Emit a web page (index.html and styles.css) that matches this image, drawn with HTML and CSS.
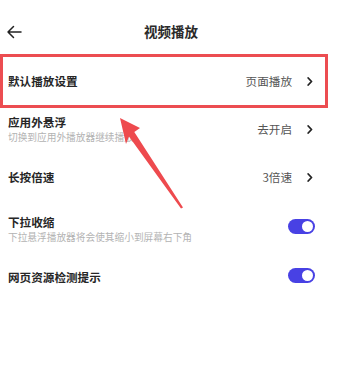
FILE: index.html
```html
<!DOCTYPE html>
<html lang="zh-CN">
<head>
<meta charset="utf-8">
<link rel="stylesheet" href="styles.css">
</head>
<body>
<div class="page">
  <header class="topbar">
    <svg class="back" width="16" height="14" viewBox="0 0 16 14"><path d="M15 7H2M7.5 1.5L2 7l5.5 5.5" fill="none" stroke="#222" stroke-width="1.5" stroke-linecap="round" stroke-linejoin="round"/></svg>
    <h1 class="title">视频播放</h1>
  </header>
  <ul class="list">
    <li class="row row-hl">
      <div class="texts"><span class="name">默认播放设置</span></div>
      <span class="value">页面播放</span>
      <svg class="chev" width="6" height="9" viewBox="0 0 6 9"><path d="M1.2 1l3.3 3.5L1.2 8" fill="none" stroke="#222" stroke-width="1.8" stroke-linecap="round" stroke-linejoin="round"/></svg>
    </li>
    <li class="row">
      <div class="texts"><span class="name">应用外悬浮</span><span class="sub">切换到应用外播放器继续播放</span></div>
      <span class="value">去开启</span>
      <svg class="chev" width="6" height="9" viewBox="0 0 6 9"><path d="M1.2 1l3.3 3.5L1.2 8" fill="none" stroke="#222" stroke-width="1.8" stroke-linecap="round" stroke-linejoin="round"/></svg>
    </li>
    <li class="row">
      <div class="texts"><span class="name">长按倍速</span></div>
      <span class="value">3倍速</span>
      <svg class="chev" width="6" height="9" viewBox="0 0 6 9"><path d="M1.2 1l3.3 3.5L1.2 8" fill="none" stroke="#222" stroke-width="1.8" stroke-linecap="round" stroke-linejoin="round"/></svg>
    </li>
    <li class="row row-gap">
      <div class="texts"><span class="name">下拉收缩</span><span class="sub">下拉悬浮播放器将会使其缩小到屏幕右下角</span></div>
      <span class="toggle toggle-up"><span class="knob"></span></span>
    </li>
    <li class="row">
      <div class="texts"><span class="name">网页资源检测提示</span></div>
      <span class="toggle toggle-up2"><span class="knob"></span></span>
    </li>
  </ul>
  <svg class="pointer" width="342" height="382" viewBox="0 0 342 382">
    <polygon points="120,118 140,128 134.3,132 183,207.5 181,208.5 129,136.5 126,144" fill="#ee4a4e"/>
  </svg>
</div>
</body>
</html>
```
FILE: styles.css
```css
* { box-sizing: border-box; }
html, body { margin: 0; padding: 0; background: #fff; }
body {
  font-family: "Noto Sans CJK SC", "Noto Sans", "Liberation Sans", sans-serif;
  color: #222;
}
.page {
  position: relative;
  width: 342px;
  height: 382px;
  overflow: hidden;
}
.topbar {
  height: 57px;
  padding-top: 7px;
  display: flex;
  align-items: center;
  position: relative;
}
.back {
  position: absolute;
  left: 6px;
  top: 25px;
}
.title {
  margin: 0;
  width: 100%;
  text-align: center;
  font-size: 13.5px;
  font-weight: 700;
  line-height: 1;
  color: #2a2a2a;
}
.list {
  list-style: none;
  margin: 0 17px 0 3px;
  padding: 0;
}
.row {
  height: 48px;
  display: flex;
  align-items: center;
  padding: 0 12px 0 5px;
}
.row-gap { margin-top: 4px; }
.row-hl {
  outline: 3px solid #ec4d51;
}
.texts {
  flex: 1;
  display: flex;
  flex-direction: column;
  gap: 3px;
}
.name {
  font-size: 11.6px;
  font-weight: 700;
  line-height: 13px;
  color: #262626;
}
.sub {
  font-size: 9.7px;
  line-height: 11px;
  color: #b3b3b3;
}
.value {
  font-size: 11.6px;
  color: #555;
  margin-right: 15px;
}
.chev { display: block; }
.toggle {
  width: 27px;
  height: 15px;
  border-radius: 8px;
  background: #4841e4;
  position: relative;
  margin-right: -2px;
}
.toggle-up { margin-top: -6px; }
.toggle-up2 { margin-top: -4px; }
.knob {
  position: absolute;
  right: 2px;
  top: 2px;
  width: 11px;
  height: 11px;
  border-radius: 50%;
  background: #fff;
}
.pointer {
  position: absolute;
  left: 0;
  top: 0;
  pointer-events: none;
}
```
